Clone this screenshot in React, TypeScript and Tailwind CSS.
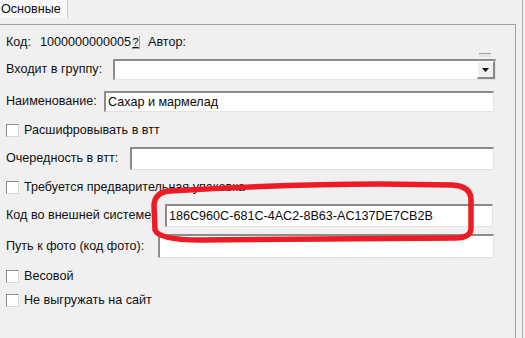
import React from "react";

function Field({ text, className = "" }: { text?: string; className?: string }) {
  return (
    <div
      className={`flex h-full items-center border-t-2 border-l-2 border-b border-r border-t-[#8c8c8c] border-l-[#8c8c8c] border-b-[#e3e3e3] border-r-[#e3e3e3] bg-white pl-[2px] text-[#0a0a0a] ${className}`}
    >
      {text}
    </div>
  );
}

function Check({ label, className = "" }: { label: string; className?: string }) {
  return (
    <div className={`flex h-[16px] items-center pl-[6px] ${className}`}>
      <span className="h-[13px] w-[13px] border border-[#8c8c8c] border-r-[#d8d8d8] border-b-[#d8d8d8] bg-white" />
      <span className="ml-[5px]">{label}</span>
    </div>
  );
}

function Row({
  label,
  labelW,
  h,
  className = "",
  children,
}: {
  label: string;
  labelW: string;
  h: string;
  className?: string;
  children: React.ReactNode;
}) {
  return (
    <div className={`flex items-center pl-[6px] pr-[21px] ${h} ${className}`}>
      <span className={`shrink-0 whitespace-nowrap ${labelW}`}>{label}</span>
      <div className="h-full flex-1">{children}</div>
    </div>
  );
}

export default function App() {
  return (
    <div className="relative h-[338px] w-[525px] overflow-hidden bg-[#f0f0f0] font-['Liberation_Sans',Arial,sans-serif] text-[12.6px] text-[#111]">
      {/* tab strip */}
      <div className="flex h-[24px] items-start">
        <div className="flex h-[18px] w-[68px] items-center border-r border-[#c8c8c8] bg-[#f8f8f8] pl-[1px]">
          Основные
        </div>
      </div>

      {/* panel */}
      <div className="h-[314px] w-[516px] border-t border-r border-[#a0a0a0]">
        <div className="mt-[8px] flex h-[18px] items-center pl-[6px]">
          <span>Код:</span>
          <span className="ml-[9px]">1000000000005</span>
          <span className="flex h-[14px] w-[9px] items-center justify-center border border-[#a0a0a0] border-t-[#fff] border-l-[#fff] bg-[#e8e8e8] text-[11px] leading-none underline">
            ?
          </span>
          <span className="ml-[8px]">Автор:</span>
        </div>

        <div className="relative mt-[8px] flex h-[21px] items-center pl-[6px] pr-[19px]">
          <span className="w-[107px] shrink-0">Входит в группу:</span>
          <div className="flex h-full flex-1 border-t-2 border-l-2 border-b border-r border-t-[#8c8c8c] border-l-[#8c8c8c] border-b-[#e3e3e3] border-r-[#e3e3e3] bg-white">
            <div className="flex-1" />
            <div className="flex w-[18px] items-center justify-center border-l border-t border-l-[#fff] border-t-[#fff] border-r-2 border-b-2 border-r-[#8a8a8a] border-b-[#8a8a8a] bg-[#f0f0f0]">
              <svg width="7" height="4" viewBox="0 0 7 4">
                <path d="M0 0h7L3.5 4z" fill="#111" />
              </svg>
            </div>
          </div>
          <div className="absolute right-[24px] -top-[6px] h-[4px] w-[12px] border-t border-[#a0a0a0] bg-[#e4e4e4]" />
        </div>

        <Row label="Наименование:" labelW="w-[98px]" h="h-[21px]" className="mt-[11px]">
          <Field text="Сахар и мармелад" />
        </Row>

        <Check label="Расшифровывать в втт" className="mt-[10px]" />

        <Row label="Очередность в втт:" labelW="w-[124px]" h="h-[23px]" className="mt-[9px]">
          <Field />
        </Row>

        <Check label="Требуется предварительная упаковка" className="mt-[9px]" />

        <div className="mt-[9px] flex h-[23px] items-center pl-[6px] pr-[22px]">
          <span className="w-[159px] shrink-0 whitespace-nowrap">Код во внешней системе:</span>
          <div className="h-full flex-1">
            <Field text="186C960C-681C-4AC2-8B63-AC137DE7CB2B" />
          </div>
        </div>

        <Row label="Путь к фото (код фото):" labelW="w-[152px]" h="h-[24px]" className="mt-[7px]">
          <Field />
        </Row>

        <Check label="Весовой" className="mt-[10px]" />
        <Check label="Не выгружать на сайт" className="mt-[8px]" />
      </div>

      {/* outer right edge */}
      <div className="absolute right-[2px] top-0 h-full w-px bg-[#a8a8a8]" />

      {/* red annotation */}
      <svg className="pointer-events-none absolute left-0 top-0" width="525" height="338">
        <path
          d="M170 191 C240 187 300 184 380 184 L452 185 Q471 186 471 200 L471 228 Q471 238 455 238 L200 240 Q159 240 155 230 L154 205 Q155 192 170 191 Z"
          fill="none"
          stroke="#ed1c24"
          strokeWidth="5.5"
        />
      </svg>
    </div>
  );
}
